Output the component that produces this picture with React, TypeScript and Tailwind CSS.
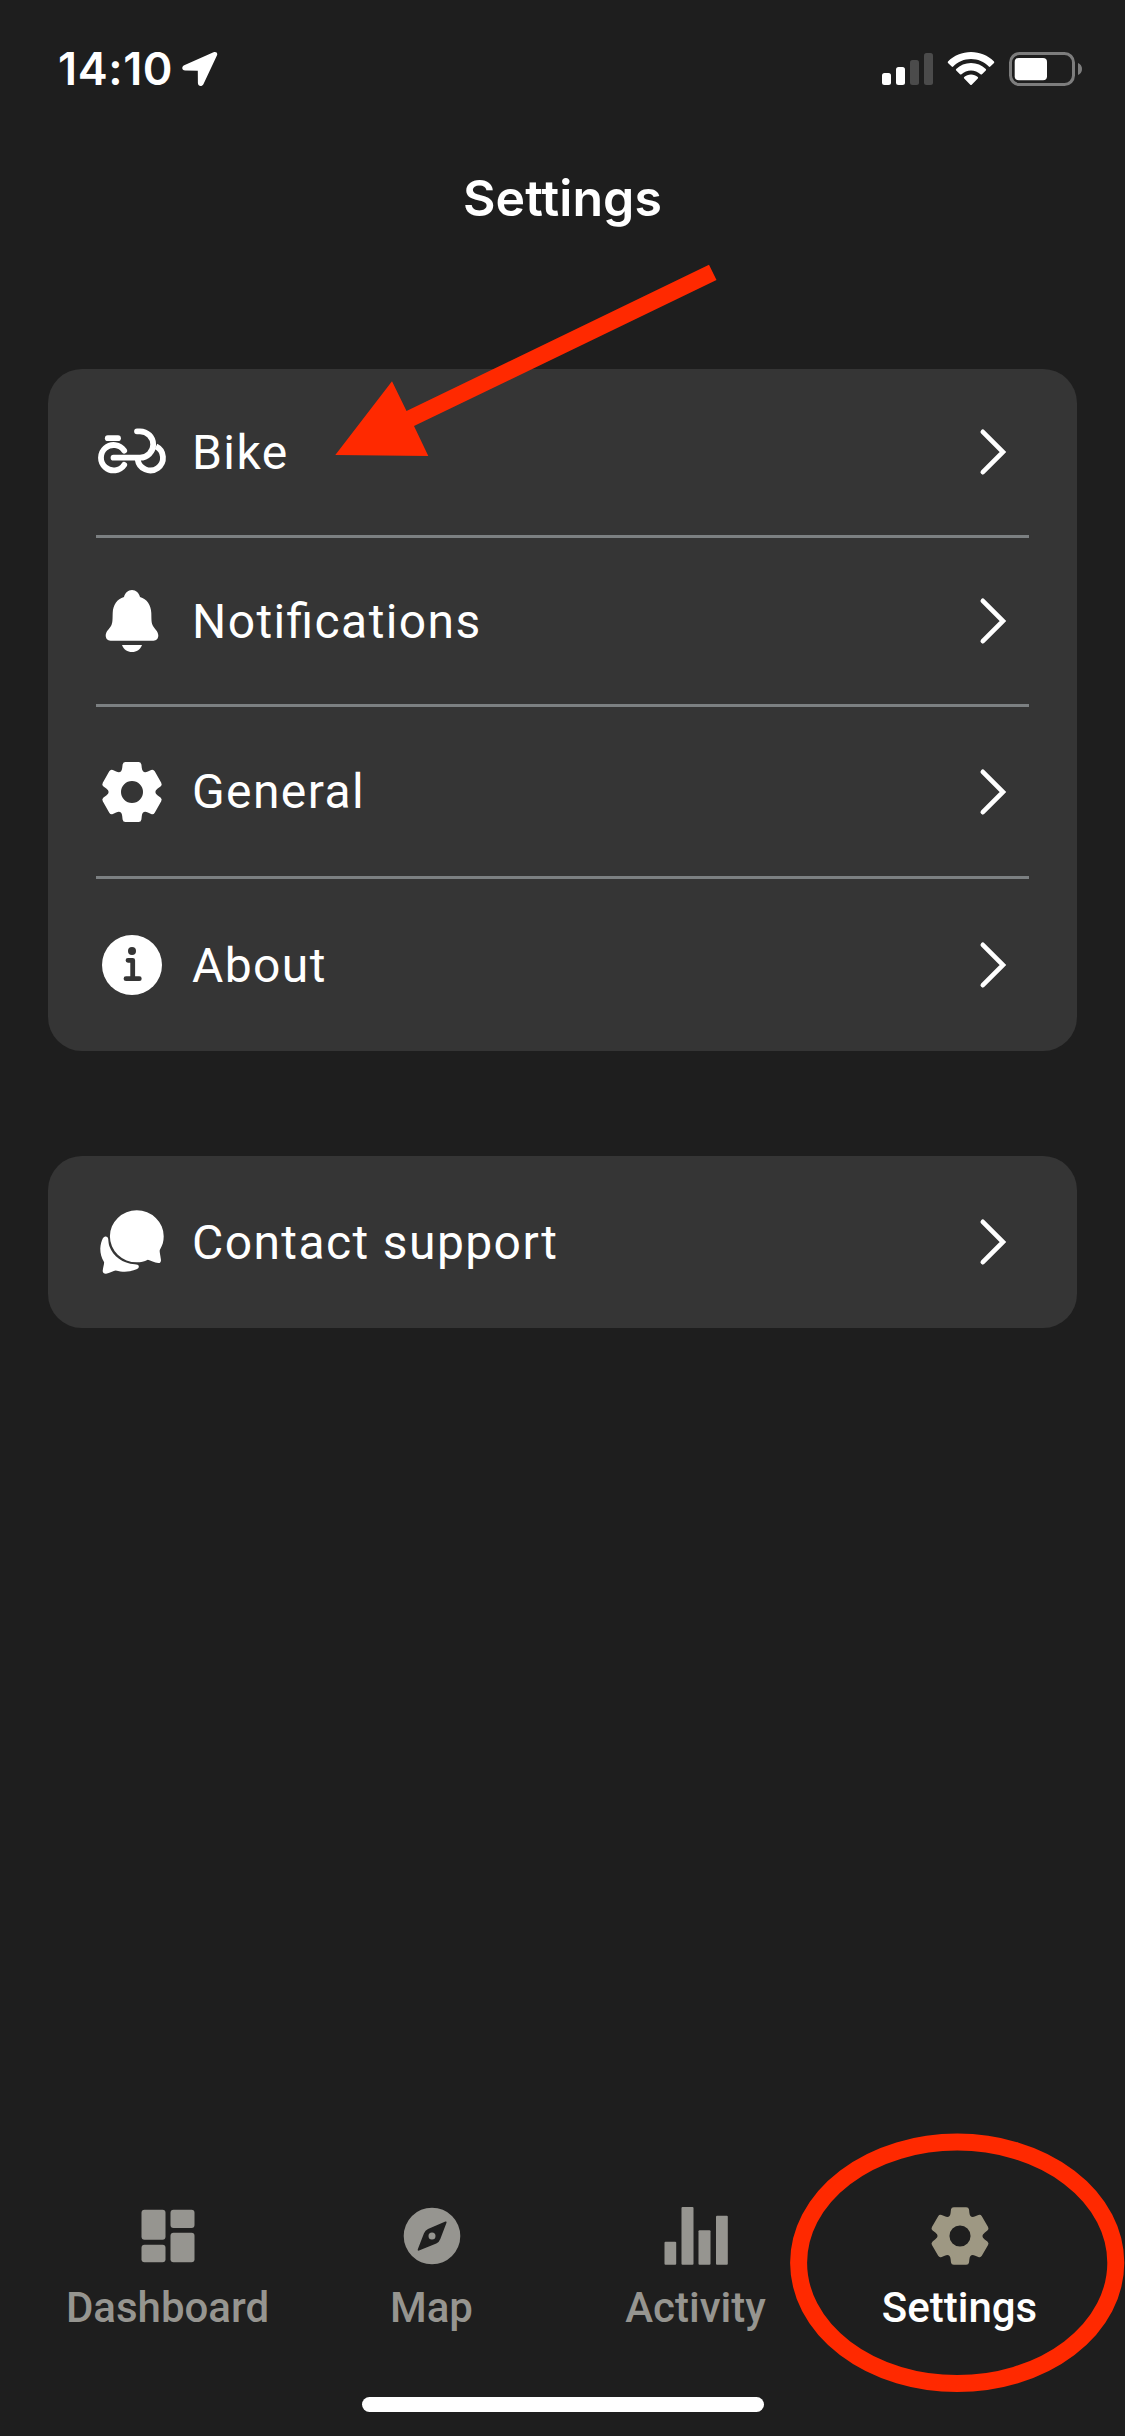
import type { ReactNode } from "react";

/* Outline of a six-toothed cog centred on the origin, 30 units in radius. */
function cogPath(): string {
  const parts: string[] = [];
  for (let i = 0; i < 6; i++) {
    const a = (i * Math.PI) / 3;
    const p = (x: number, y: number) =>
      `${(x * Math.cos(a) - y * Math.sin(a)).toFixed(2)} ${(x * Math.sin(a) + y * Math.cos(a)).toFixed(2)}`;
    parts.push(
      `${i === 0 ? "M" : "L"}${p(-9.4, -27.5)}`,
      `Q${p(-9, -30)} ${p(-6.5, -30)}`,
      `L${p(6.5, -30)}`,
      `Q${p(9, -30)} ${p(9.4, -27.5)}`,
      `L${p(9.8, -24)}`,
      `Q${p(10.5, -18.2)} ${p(15.9, -20.5)}`,
    );
  }
  return parts.join(" ") + " Z M11 0 A11 11 0 1 0 -11 0 A11 11 0 1 0 11 0 Z";
}

const COG = cogPath();

function RowIcon({ children }: { children: ReactNode }) {
  return (
    <svg className="size-[72px] shrink-0" viewBox="0 0 72 72" fill="#fff">
      {children}
    </svg>
  );
}

const bike = (
  <RowIcon>
    <g fill="none" stroke="#fff" strokeWidth="5.8" strokeLinecap="round">
      <path d="M17.5 41.7H44A13.2 13.2 0 0 0 44 15.3H41" />
      <path d="M28.2 34.6A12.700 12.700 0 1 0 28.2 48.8" />
      <path d="M41.700 43.5A12.700 12.700 0 1 0 60 30.4" strokeLinecap="butt" />
      <path d="M11.8 22.2H22" />
    </g>
  </RowIcon>
);

const bell = (
  <RowIcon>
    <path d="M28 12C29 8 32 5 36 5S43 8 44 12C51 14 55 20 55.3 28C55.5 34 55.3 37 56.5 40C58 43.500 62.300 46 62.300 50.500C62.300 53.500 60.500 55.700 57.500 55.700H14.500C11.500 55.700 9.700 53.500 9.700 50.500C9.700 46 14 43.500 15.500 40C16.700 37 16.500 34 16.700 28C17 20 21 14 28 12Z" />
    <path d="M26 60H46C44.500 64.500 40.500 67 36 67S27.500 64.500 26 60Z" />
  </RowIcon>
);

const cog = (
  <RowIcon>
    <path d={COG} fillRule="evenodd" transform="translate(36 36)" />
  </RowIcon>
);

const info = (
  <RowIcon>
    <circle cx="36" cy="36" r="30" />
    <circle cx="36" cy="22" r="4" fill="#353535" />
    <path
      d="M32 31.300H36.700V49.700M30 49.700H43.300"
      fill="none"
      stroke="#353535"
      strokeWidth="4.800"
      strokeLinecap="round"
      strokeLinejoin="round"
    />
  </RowIcon>
);

const chat = (
  <RowIcon>
    <g transform="translate(0 0.8) scale(1 0.968)">
      <path d="M40.800 57.400A26.900 26.900 0 1 1 67.700 30.500C67.700 36 66.500 40 63.800 44.500C63.200 46 64.900 52 65 55.200C65 57 64 58.400 62.300 58.100C58.500 57.500 54.500 55.400 51.800 54.600C48 56.500 45 57.400 40.800 57.400Z" />
      <path d="M12.200 33C12.500 36 12.600 38 13.300 40.500C17 51.500 27 58.600 38.700 59.300C41 59.400 42.600 59.800 42.800 61.300C43 63 42 63.900 40.500 64.600C34 67.300 27.500 68 19.800 65.700C17.500 65.900 13.500 68.300 10.100 69.100C8 69.300 6.500 68 6.700 66C7 62.500 8.500 58.500 8 57C5.300 52 4.200 47.500 4.300 42.900C4.500 39 5.500 35 7 32.300C8.500 30 11.500 29.800 12.200 33Z" />
    </g>
  </RowIcon>
);

interface RowProps {
  icon: ReactNode;
  label: string;
  height: string;
  labelPad?: string;
}

function Row({ icon, label, height, labelPad = "pt-[2px]" }: RowProps) {
  return (
    <div className={`flex items-center gap-6 ${height}`}>
      {icon}
      <span
        className={`flex-1 whitespace-nowrap text-5xl tracking-[1.4px] text-white [font-feature-settings:'liga'_1] ${labelPad}`}
      >
        {label}
      </span>
      <svg className="mr-5 h-12 w-8 shrink-0" viewBox="0 0 32 48" fill="none" stroke="#fff">
        <path d="M5.800 3.800L26 24L5.800 44.200" strokeWidth="4.600" strokeLinecap="round" />
      </svg>
    </div>
  );
}

const Divider = () => <div className="h-[3px] bg-[#7c8082]" />;

function Tab({ label, active, children }: { label: string; active?: boolean; children: ReactNode }) {
  return (
    <div className="flex w-[264px] flex-col items-center">
      <svg
        className={`h-16 w-16 overflow-visible ${active ? "text-[#9e9883]" : "text-[#969590]"}`}
        viewBox="0 0 64 64"
        fill="currentColor"
      >
        {children}
      </svg>
      <span
        className={`mt-[15px] text-[42px] leading-[50px] font-medium ${active ? "text-white" : "text-[#969590]"}`}
      >
        {label}
      </span>
    </div>
  );
}

export default function App() {
  return (
    <div className="relative flex h-[2436px] w-[1125px] flex-col overflow-hidden bg-[#1e1e1e] font-['Roboto',sans-serif]">
      <header className="font-['Inter',sans-serif] text-white">
        <div className="flex h-[138px] items-center pr-[43px] pl-[58px]">
          <span className="text-[45px] font-semibold tracking-[0.6px]">14:10</span>
          <svg className="ml-[9px] h-9 w-9" viewBox="0 0 36 36" fill="#fff">
            <path d="M31.500 1.200C34.200 0.200 36 2 34.900 4.600L21.400 33.200C20 36 15.900 35.400 15.900 32.100L15.800 19.800L3.200 19.500C-0.200 19.400 -0.800 15.600 2.200 14.200Z" />
          </svg>
          <svg className="ml-auto h-9 w-[200px]" viewBox="882 51 200 36">
            <g fill="#fff">
              <rect x="882" y="73" width="9" height="12" rx="2.500" />
              <rect x="896" y="67" width="9" height="18" rx="2.500" />
              <rect x="910" y="60" width="9" height="25" rx="2.500" fill="#4b4b4b" />
              <rect x="924" y="53" width="9" height="32" rx="2.500" fill="#4b4b4b" />
            </g>
            <path
              d="M971 52C979.800 52 988 55.400 994 61.500Q994.600 62.300 994 63L990.300 66.600Q989.500 67.200 988.800 66.500C984 61.700 977.800 59 971 59S958 61.700 953.200 66.500Q952.500 67.200 951.700 66.600L948 63Q947.400 62.300 948 61.500C954 55.400 962.200 52 971 52Z
                 M971 63C976.700 63 981.900 65.200 985.800 69Q986.500 69.800 985.800 70.500L982 74.300Q981.200 74.900 980.500 74.300C977.900 71.900 974.600 70.500 971 70.500S964.100 71.900 961.500 74.300Q960.800 74.900 960 74.300L956.200 70.500Q955.500 69.800 956.200 69C960.100 65.200 965.300 63 971 63Z
                 M971 74.500C973.600 74.500 976 75.400 977.800 76.900Q978.500 77.600 977.800 78.400L971.700 84.700Q971 85.300 970.300 84.700L964.200 78.400Q963.500 77.600 964.200 76.900C966 75.400 968.400 74.500 971 74.500Z"
              fill="#fff"
            />
            <rect x="1010.500" y="53.500" width="63" height="31" rx="9" fill="none" stroke="#7d7d7d" strokeWidth="3" />
            <rect x="1014.700" y="58" width="32.300" height="22.300" rx="4" fill="#fff" />
            <path d="M1078 63C1080.500 64 1082 66.300 1082 69S1080.500 74 1078 75Z" fill="#7d7d7d" />
          </svg>
        </div>
        <h1 className="flex h-[120px] items-center justify-center text-[50px] font-semibold tracking-[0.1px]">
          Settings
        </h1>
      </header>

      <main className="flex flex-col px-12 pt-[111px]">
        <section className="rounded-[34px] bg-[#353535] px-12">
          <Row icon={bike} label="Bike" height="h-[166px]" />
          <Divider />
          <Row icon={bell} label="Notifications" height="h-[166px]" />
          <Divider />
          <Row icon={cog} label="General" height="h-[169px]" labelPad="pt-0" />
          <Divider />
          <Row icon={info} label="About" height="h-[172px]" />
        </section>
        <section className="mt-[105px] rounded-[34px] bg-[#353535] px-12">
          <Row icon={chat} label="Contact support" height="h-[172px]" />
        </section>
      </main>

      <footer className="mt-auto">
        <nav className="flex justify-center pl-[2px]">
          <Tab label="Dashboard">
            <rect x="5.500" y="5.700" width="24" height="30" rx="3" />
            <rect x="5.500" y="40.700" width="24" height="17.600" rx="3" />
            <rect x="34.500" y="5.700" width="24" height="18.300" rx="3" />
            <rect x="34.500" y="28.700" width="24" height="29.600" rx="3" />
          </Tab>
          <Tab label="Map">
            <path
              fillRule="evenodd"
              d="M32 3.700A28.300 28.300 0 1 0 32 60.300A28.300 28.300 0 1 0 32 3.700ZM45.400 17.600Q47 17.300 46.500 18.800L40.300 35Q39.300 38 36.300 39.400L19 46.600Q17.200 47 17.800 45.300L24 29.300Q25.200 26.200 28 25ZM32 28.500A3.500 3.500 0 1 1 32 35.500A3.500 3.500 0 1 1 32 28.500Z"
            />
          </Tab>
          <Tab label="Activity">
            <rect x="0.500" y="37.700" width="11.700" height="23" rx="1" />
            <rect x="17.500" y="3" width="12" height="57.700" rx="1" />
            <rect x="34.500" y="26.300" width="12" height="34.400" rx="1" />
            <rect x="52" y="11.700" width="11.800" height="49" rx="1" />
          </Tab>
          <Tab label="Settings" active>
            <path d={COG} fillRule="evenodd" transform="translate(32 32) scale(0.96)" />
          </Tab>
        </nav>
        <div className="mx-auto mt-16 mb-6 h-[15px] w-[402px] rounded-full bg-white" />
      </footer>

      {/* Red annotations drawn over the screen */}
      <svg className="pointer-events-none absolute inset-0" width="1125" height="2436" viewBox="0 0 1125 2436">
        <path
          d="M335.300 455L392 381.300L406.500 411L709 264.700L716.500 280L414 426L428.300 456Z"
          fill="#ff2900"
        />
        <ellipse cx="957.200" cy="2262.800" rx="158.600" ry="120.700" fill="none" stroke="#ff2900" strokeWidth="17" />
      </svg>
    </div>
  );
}
